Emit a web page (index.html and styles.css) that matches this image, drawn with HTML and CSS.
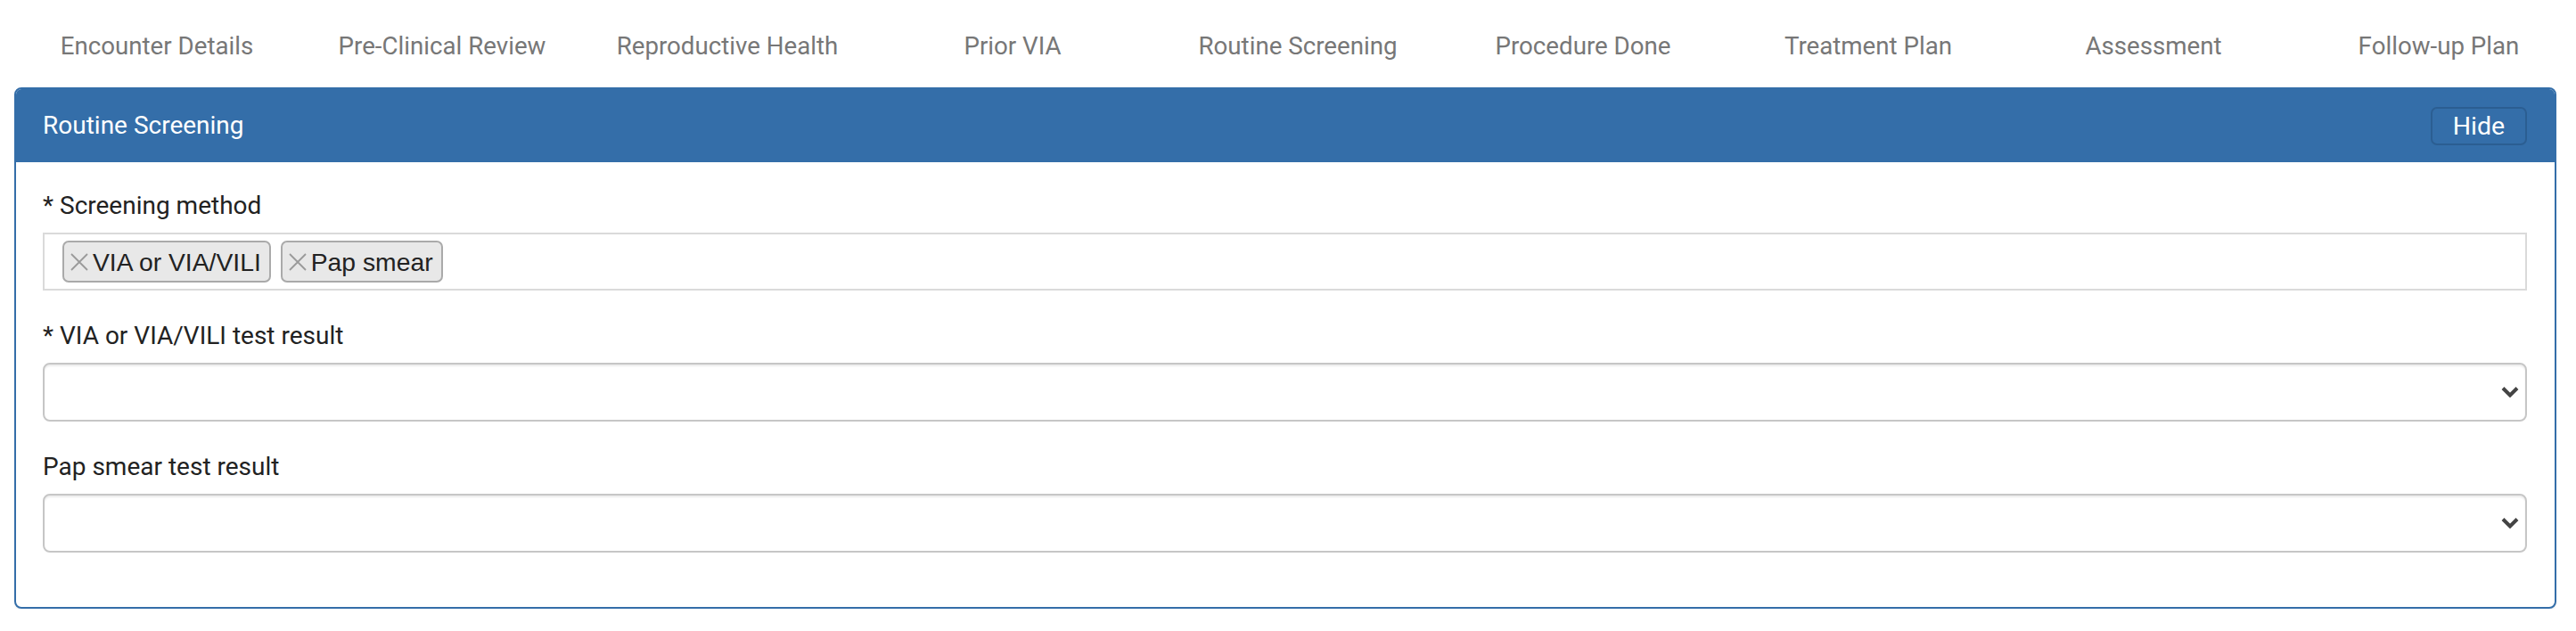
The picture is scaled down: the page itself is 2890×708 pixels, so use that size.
FILE: index.html
```html
<!DOCTYPE html>
<html>
<head>
<meta charset="utf-8">
<link rel="stylesheet" href="styles.css">
</head>
<body>
<nav class="tabs">
  <div class="tab">Encounter Details</div>
  <div class="tab">Pre-Clinical Review</div>
  <div class="tab">Reproductive Health</div>
  <div class="tab">Prior VIA</div>
  <div class="tab">Routine Screening</div>
  <div class="tab">Procedure Done</div>
  <div class="tab">Treatment Plan</div>
  <div class="tab">Assessment</div>
  <div class="tab">Follow-up Plan</div>
</nav>
<section class="panel">
  <header class="panel-heading">
    <span class="panel-title">Routine Screening</span>
    <button class="btn-hide">Hide</button>
  </header>
  <div class="panel-body">
    <div class="form-group">
      <label class="field-label">* Screening method</label>
      <div class="multi">
        <span class="chip"><svg class="chip-x" viewBox="0 0 22 22" width="22" height="22"><path d="M2 2 L20 20 M20 2 L2 20" stroke="#9a9a9a" stroke-width="1.8" fill="none"/></svg><span class="chip-text">VIA or VIA/VILI</span></span>
        <span class="chip"><svg class="chip-x" viewBox="0 0 22 22" width="22" height="22"><path d="M2 2 L20 20 M20 2 L2 20" stroke="#9a9a9a" stroke-width="1.8" fill="none"/></svg><span class="chip-text">Pap smear</span></span>
      </div>
    </div>
    <div class="form-group">
      <label class="field-label">* VIA or VIA/VILI test result</label>
      <div class="select"><svg class="chev" viewBox="0 0 20 12" width="20" height="12"><path d="M2 1.5 L10 9.5 L18 1.5" stroke="#444" stroke-width="4" fill="none"/></svg></div>
    </div>
    <div class="form-group">
      <label class="field-label">Pap smear test result</label>
      <div class="select"><svg class="chev" viewBox="0 0 20 12" width="20" height="12"><path d="M2 1.5 L10 9.5 L18 1.5" stroke="#444" stroke-width="4" fill="none"/></svg></div>
    </div>
  </div>
</section>
</body>
</html>
```
FILE: styles.css
```css
html, body {
  margin: 0;
  padding: 0;
  background: #fff;
  overflow: hidden;
}
body {
  font-family: Roboto, "Liberation Sans", sans-serif;
  font-size: 28px;
  line-height: 42px;
  color: #222;
}
.tabs {
  display: flex;
  padding: 31px 0 0 16px;
  margin-bottom: 25px;
}
.tab {
  flex: 0 0 320px;
  text-align: center;
  color: #777;
  font-size: 27.7px;
  white-space: nowrap;
}
.panel {
  margin: 0 22px 0 16px;
  border: 2px solid #346ea9;
  border-radius: 8px;
  box-shadow: 0 2px 2px rgba(0,0,0,0.06);
  background: #fff;
}
.panel-heading {
  background: #346ea9;
  display: flex;
  align-items: center;
  justify-content: space-between;
  height: 82px;
  box-sizing: border-box;
  padding: 0 31px 0 30px;
  border-radius: 6px 6px 0 0;
}
.panel-title {
  color: #fff;
}
.btn-hide {
  font-family: Roboto, "Liberation Sans", sans-serif;
  font-size: 28.5px;
  color: #fff;
  background: #346ea9;
  border: 2px solid #2b5e92;
  border-radius: 7px;
  width: 108px;
  height: 43px;
  padding: 0;
  line-height: 39px;
}
.panel-body {
  padding: 28px 31px 31px 30px;
}
.form-group {
  margin-bottom: 30px;
}
.field-label {
  display: block;
  margin-bottom: 9px;
  color: #222;
}
.multi {
  height: 65px;
  box-sizing: border-box;
  border: 2px solid #dadada;
  display: flex;
  align-items: center;
  gap: 11px;
  padding: 0 20px;
}
.chip {
  display: inline-flex;
  align-items: center;
  height: 47px;
  box-sizing: border-box;
  border: 2px solid #aaa;
  border-radius: 7px;
  background: #e8e8e8;
  padding: 0 9px 0 6px;
  font-family: "Liberation Sans", Arial, sans-serif;
  font-size: 28.3px;
  color: #222;
}
.chip-x {
  display: block;
  margin-right: 4px;
}
.select {
  height: 66px;
  box-sizing: border-box;
  border: 2px solid #c6c6c6;
  border-radius: 8px;
  box-shadow: inset 0 2px 2px rgba(0,0,0,0.075);
  display: flex;
  align-items: center;
  justify-content: flex-end;
  padding-right: 7px;
}
.chev {
  display: block;
}
```
